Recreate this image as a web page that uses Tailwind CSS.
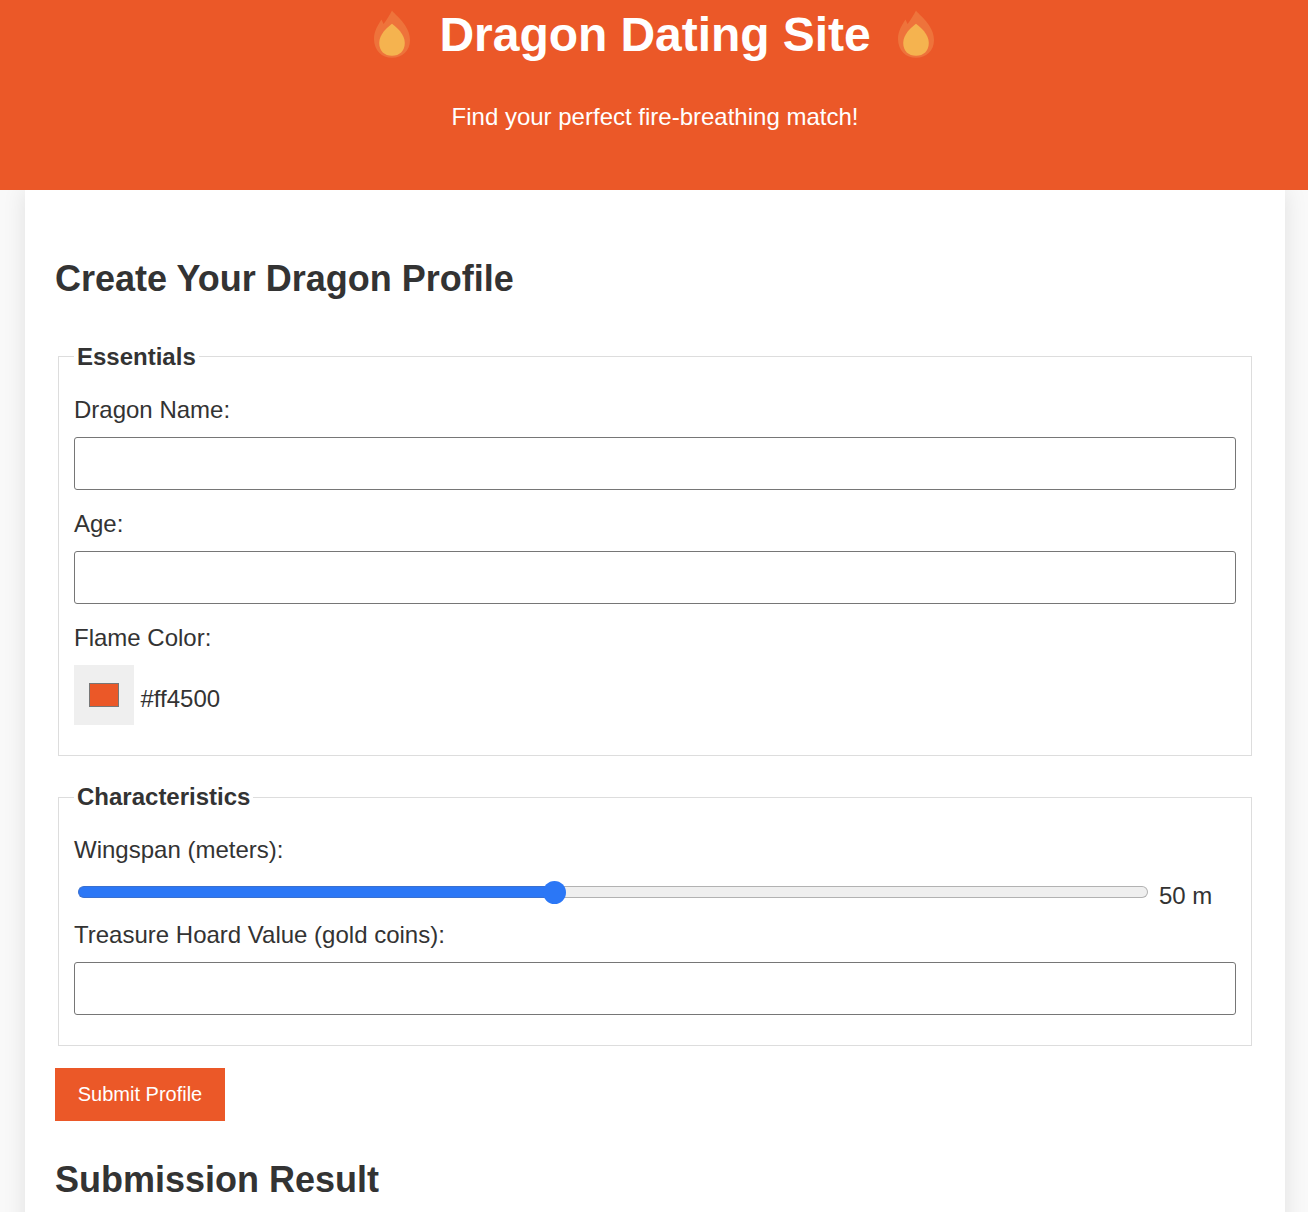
<!DOCTYPE html>
<html lang="en">
<head>
<meta charset="utf-8">
<title>Dragon Dating Site</title>
<script src="https://cdn.jsdelivr.net/npm/@tailwindcss/browser@4"></script>
</head>
<body class="h-[1212px] overflow-hidden bg-[#f9f9f9] font-['Liberation_Sans',Arial,sans-serif] text-2xl leading-9 text-[#333]">
<header class="relative z-10 h-[190px] bg-[#eb5828] text-center text-white">
  <h1 class="flex h-[68px] items-center justify-center text-5xl leading-[68px] font-bold">
    <svg class="mr-[30px] h-[48px] w-9" viewBox="0 0 36 48" aria-hidden="true"><path fill="#ee733b" d="M18 0.5C21 5 36 15 36 30C36 41 28 47.800 18 47.800C8 47.800 0 40.500 0 29C0 21 4 15 7.500 9.500L9.500 14C13 9.500 15.500 5 18 .5Z"/><path fill="#f5b34f" d="M18 13.800C22.500 17 30.800 24.500 30.800 33C30.800 41 25.500 45.800 18 45.800C10.500 45.800 5.200 41 5.200 33C5.200 24.500 13.500 17 18 13.800Z"/></svg>
    <span class="mt-[2px] w-[429px] whitespace-nowrap tracking-[-0.05px]">Dragon Dating Site</span>
    <svg class="mr-[0.5px] ml-[29.500px] h-[48px] w-9" viewBox="0 0 36 48" aria-hidden="true"><path fill="#ee733b" d="M18 0.5C21 5 36 15 36 30C36 41 28 47.800 18 47.800C8 47.800 0 40.500 0 29C0 21 4 15 7.500 9.500L9.500 14C13 9.500 15.500 5 18 .5Z"/><path fill="#f5b34f" d="M18 13.800C22.500 17 30.800 24.500 30.800 33C30.800 41 25.500 45.800 18 45.800C10.500 45.800 5.200 41 5.200 33C5.200 24.500 13.500 17 18 13.800Z"/></svg>
  </h1>
  <p class="mt-[31px] pl-[2px]">Find your perfect fire-breathing match!</p>
</header>
<main class="ml-[25px] h-[1060px] w-[1260px] bg-white px-[30px] pt-[62px] shadow-[0_0_22px_rgba(0,0,0,0.1)]">
  <h2 class="text-4xl leading-[54px] font-bold">Create Your Dragon Profile</h2>
  <form>
    <fieldset class="mx-[3px] mt-[33px] h-[417px] border border-[#ddd] px-[15px]">
      <legend class="h-[35px] px-[3px] font-bold">Essentials</legend>
      <label for="name" class="mt-[18px] block">Dragon Name:</label>
      <input id="name" type="text" class="mt-[9px] block h-[53px] w-full rounded-[3px] border border-[#767676] bg-white px-3">
      <label for="age" class="mt-4 block">Age:</label>
      <input id="age" type="text" class="mt-[9px] block h-[53px] w-full rounded-[3px] border border-[#767676] bg-white px-3">
      <label class="mt-4 block">Flame Color:</label>
      <div class="mt-[9px] flex">
        <button type="button" aria-label="Flame color" class="flex h-[60px] w-[60px] items-center justify-center bg-[#efefef]"><span class="h-6 w-[30px] border border-[#777] bg-[#eb5828]"></span></button>
        <span class="mt-4 ml-[6.500px]">#ff4500</span>
      </div>
    </fieldset>
    <fieldset class="mx-[3px] mt-[23px] h-[267px] border border-[#ddd] px-[15px]">
      <legend class="px-[3px] font-bold">Characteristics</legend>
      <label class="mt-[17px] block">Wingspan (meters):</label>
      <div class="flex h-[49px] pt-[11px] pl-1">
        <div class="mt-[1px] flex h-6 w-[1070px] items-center">
          <div class="-mr-3 h-3 w-[477px] rounded-l-full border border-r-0 border-[#3a70d0] bg-[#2b77f6]"></div>
          <div class="z-10 h-[23px] w-[23px] rounded-full bg-[#2b77f6]"></div>
          <div class="-ml-3 h-3 flex-1 rounded-r-full border border-l-0 border-[#b2b2b2] bg-[#efefef]"></div>
        </div>
        <span class="-mt-px ml-[11px]">50 m</span>
      </div>
      <label for="gold" class="block">Treasure Hoard Value (gold coins):</label>
      <input id="gold" type="text" class="mt-[9px] block h-[53px] w-full rounded-[3px] border border-[#767676] bg-white px-3">
    </fieldset>
    <button type="button" class="mt-[22px] block h-[53px] w-[170px] bg-[#eb5828] pb-[2px] text-xl text-white">Submit Profile</button>
  </form>
  <h2 class="mt-[32px] text-4xl leading-[54px] font-bold">Submission Result</h2>
</main>
</body>
</html>
